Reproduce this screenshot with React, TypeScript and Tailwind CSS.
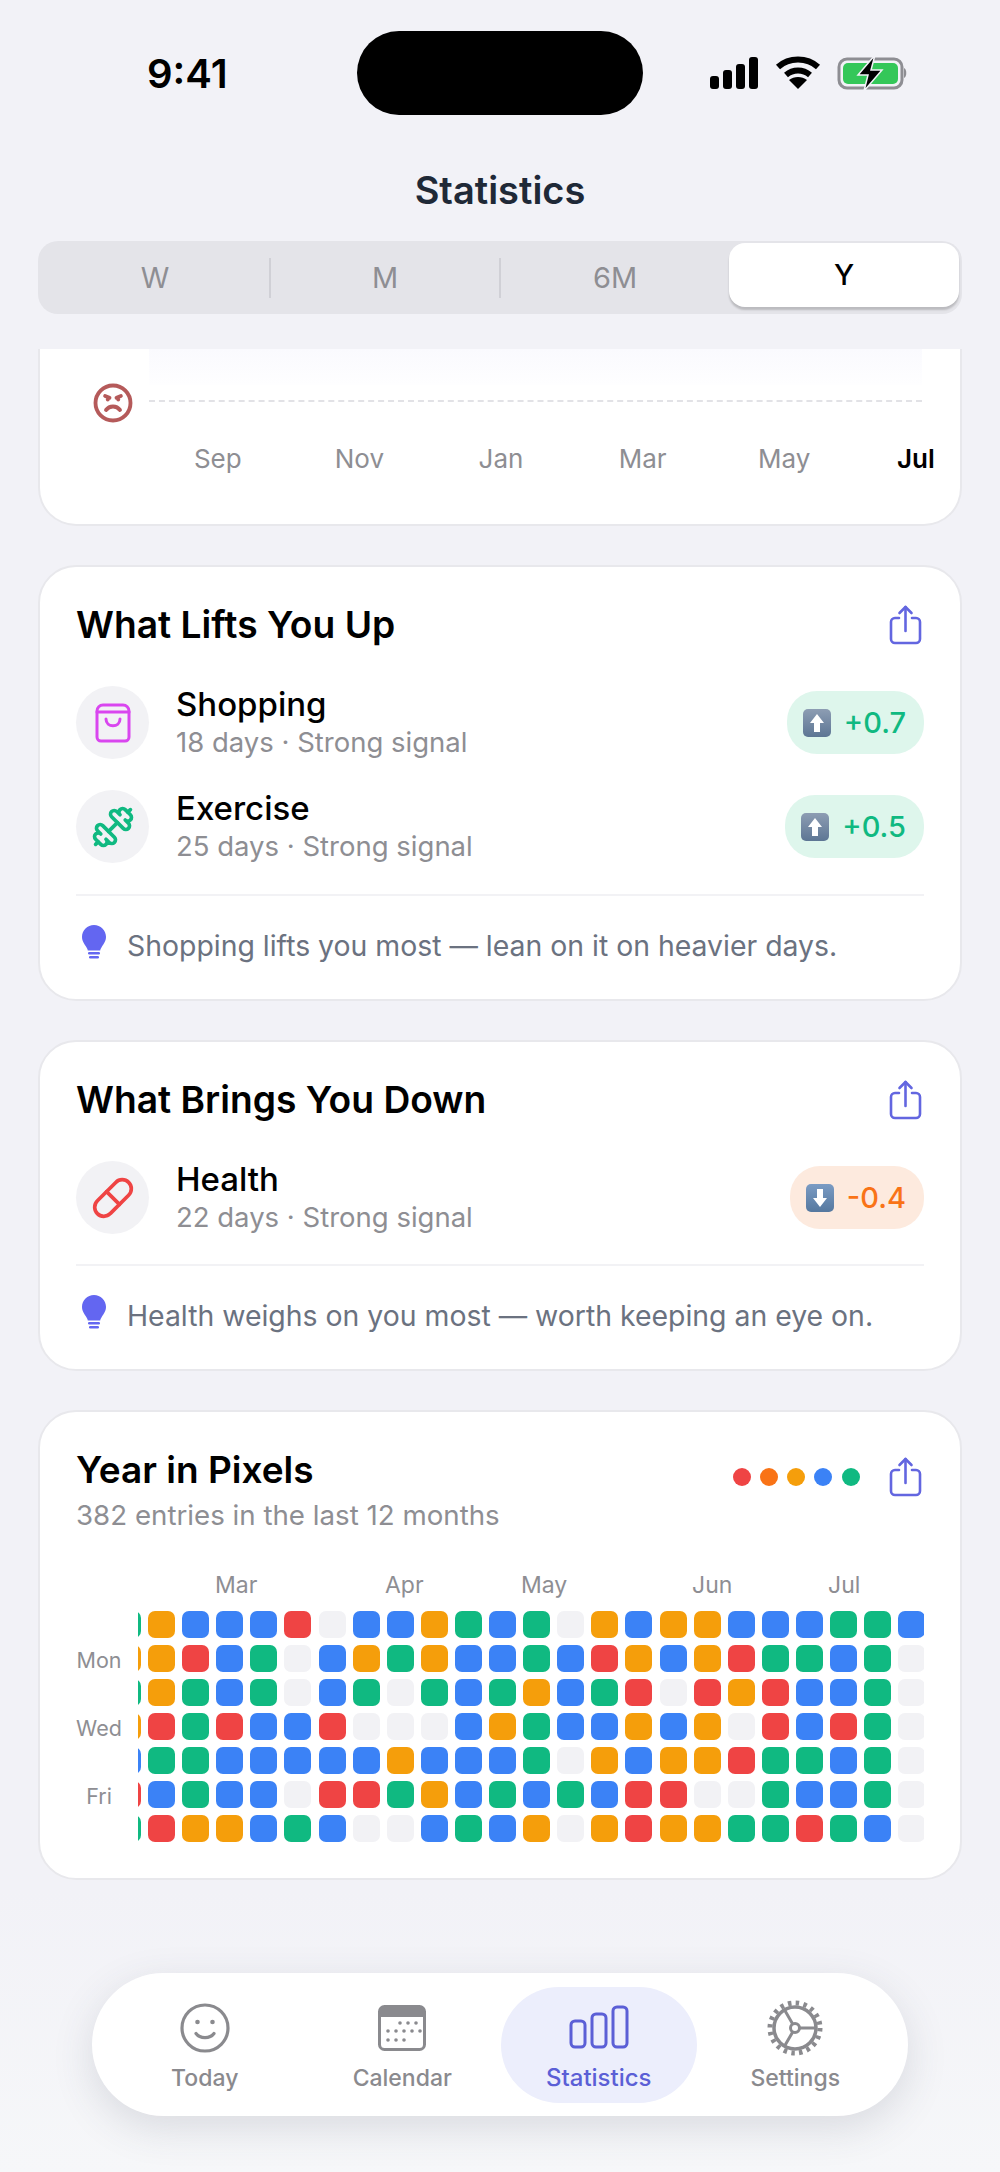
import { Angry, Dumbbell, Pill } from "lucide-react";

const font = { fontFamily: "Inter, 'Liberation Sans', sans-serif" };

const colors: Record<string, string> = {
  B: "bg-[#3b82f6]",
  G: "bg-[#10b981]",
  O: "bg-[#f59e0b]",
  R: "bg-[#ef4444]",
  E: "bg-[#f2f2f5]",
};

// one string per weekday row, first letter is the clipped column on the left
const pixelRows = [
  "GOBBBREBBOGBGEOBOOBBBGGB",
  "OORBGEBOGOBBGBROBORGGBGE",
  "GOGBGEBGEGBGOBGRERORBBGE",
  "ORGRBBREEEBOGBBOBOERBRGE",
  "BGGBBBBBOBBBGEOBOORGGBGE",
  "RBGBBERRGOBGBGBRREEGBBGE",
  "GROOBGBEEBGBOEOROOGGRGBE",
];

const ShareIcon = () => (
  <svg width="33" height="40" viewBox="0 0 33 40" fill="none" stroke="#6366e0" strokeWidth="2.6" strokeLinecap="round" strokeLinejoin="round">
    <path d="M10 13H6a4 4 0 0 0-4 4v17a4 4 0 0 0 4 4h21a4 4 0 0 0 4-4V17a4 4 0 0 0-4-4h-4" />
    <path d="M16.5 26V2" />
    <path d="M10.5 8l6-6 6 6" />
  </svg>
);

const BulbIcon = () => (
  <svg width="24" height="34" viewBox="0 0 24 34" className="shrink-0">
    <path fill="#6366f1" d="M12 0C5.4 0 0 5.2 0 11.8c0 4.6 2.6 7.4 4.4 10.4.9 1.4 1.2 2.4 1.4 3.3h12.4c.2-.9.5-1.900 1.400-3.300C21.400 19.200 24 16.400 24 11.800 24 5.200 18.600 0 12 0z" />
    <rect x="6" y="27" width="12" height="2.400" rx="1.200" fill="#6366f1" />
    <rect x="7" y="31" width="10" height="2.400" rx="1.200" fill="#6366f1" />
  </svg>
);

const BagIcon = () => (
  <svg width="36" height="40" viewBox="0 0 36 40" fill="none" stroke="#d946ef" strokeWidth="3" strokeLinecap="round" strokeLinejoin="round">
    <path d="M8 2h20a6 6 0 0 1 6 6v26a4 4 0 0 1-4 4H6a4 4 0 0 1-4-4V8a6 6 0 0 1 6-6z" />
    <path d="M2 9h32" />
    <path d="M11 16c0 9 14 9 14 0" />
  </svg>
);

const ArrowKey = ({ down }: { down?: boolean }) => (
  <div className={`w-[28px] h-[28px] rounded-[5px] flex items-center justify-center shrink-0 ${down ? "bg-gradient-to-b from-[#7b9cc4] to-[#55789f]" : "bg-gradient-to-b from-[#8d9db3] to-[#5d7694]"}`}>
    <svg width="16" height="20" viewBox="0 0 16 20" fill="#fff" className={down ? "rotate-180" : ""}>
      <path d="M8 1l7 9h-4v9H5v-9H1z" />
    </svg>
  </div>
);

const Card = ({ title, children }: { title: string; children: React.ReactNode }) => (
  <section className="mx-[38px] rounded-[38px] border-2 border-[#e8e8ec] bg-white px-[36px]">
    <div className="flex items-center justify-between h-[40px] mt-[38px] pr-[2px]">
      <h2 className="text-[37.2px] font-semibold text-black leading-none">{title}</h2>
      <ShareIcon />
    </div>
    {children}
  </section>
);

const SignalRow = ({ icon, name, sub, value, down }: { icon: React.ReactNode; name: string; sub: string; value: string; down?: boolean }) => (
  <div className="flex items-center h-[73px]">
    <div className="w-[73px] h-[73px] rounded-full bg-[#f2f2f5] flex items-center justify-center shrink-0">{icon}</div>
    <div className="ml-[27px] flex-1">
      <div className="text-[33px] font-medium text-black leading-[38px]">{name}</div>
      <div className="text-[27.5px] text-[#8e8e93] leading-[36px] mt-[1px]">{sub}</div>
    </div>
    <div className={`h-[63px] rounded-[30px] flex items-center gap-[13px] pl-[16px] pr-[18px] ${down ? "bg-[#fdeade]" : "bg-[#def6ec]"}`}>
      <ArrowKey down={down} />
      <span className={`text-[29px] font-medium ${down ? "text-[#f97316]" : "text-[#10b981]"}`}>{value}</span>
    </div>
  </div>
);

const Insight = ({ text }: { text: string }) => (
  <>
    <div className="h-[2px] bg-[#f2f2f5]" />
    <div className="flex items-start h-[103px] pt-[29px] pl-[6px]">
      <BulbIcon />
      <p className="ml-[21px] mt-[3px] text-[28.4px] leading-[36px] text-[#6b7280]">{text}</p>
    </div>
  </>
);

export default function App() {
  return (
    <div className="relative w-[1000px] h-[2172px] overflow-hidden bg-[#f2f2f7]" style={font}>
      {/* fade behind the tab bar */}
      <div className="absolute inset-x-0 top-[1890px] h-[282px] bg-gradient-to-b from-[#f2f2f7] to-[#f6f7f9]" />

      {/* status bar */}
      <div className="relative h-[168px]">
        <span className="absolute left-[147px] top-[50px] text-[40px] font-semibold text-black leading-[48px]">9:41</span>
        <div className="absolute left-[357px] top-[31px] w-[286px] h-[84px] rounded-[42px] bg-black" />
        <svg className="absolute left-[708px] top-[56px]" width="52" height="34" viewBox="0 0 52 34" fill="#000">
          <rect x="2" y="20" width="9" height="13" rx="3" />
          <rect x="15" y="14" width="9" height="19" rx="3" />
          <rect x="28" y="8" width="9" height="25" rx="3" />
          <rect x="41" y="1" width="9" height="32" rx="3" />
        </svg>
        <svg className="absolute left-[775px] top-[56px]" width="46" height="34" viewBox="0 0 46 34" fill="none" stroke="#000" strokeWidth="6">
          <path d="M3 11c11-10 29-10 40 0" />
          <path d="M11 19c7-6 17-6 24 0" />
          <path fill="#000" stroke="none" d="M23 33l-9-9c5-4 13-4 18 0z" />
        </svg>
        <svg className="absolute left-[837px] top-[54px]" width="72" height="38" viewBox="0 0 72 38">
          <rect x="2" y="5" width="63" height="29" rx="8" fill="none" stroke="#8e8e93" strokeWidth="3" />
          <rect x="6" y="9" width="55" height="21" rx="5" fill="#34c759" />
          <path d="M67 14c3 1 3 9 0 10z" fill="#8e8e93" />
          <path d="M38 1L21 21h10l-4 16 18-21H34z" fill="#000" stroke="#f2f2f7" strokeWidth="1.500" />
        </svg>
      </div>

      <h1 className="relative text-center text-[38px] font-semibold text-[#1f2937] leading-[44px]">Statistics</h1>

      {/* range picker */}
      <div className="relative mx-[38px] mt-[29px] h-[73px] rounded-[20px] bg-[#e4e4e9] flex items-center px-[3px]">
        {["W", "M", "6M"].map((label, i) => (
          <div key={label} className={`flex-1 h-[40px] flex items-center justify-center text-[29px] text-[#8e8e93] ${i < 2 ? "border-r-2 border-[#d0d0d6]" : ""}`}>
            {label}
          </div>
        ))}
        <div className="w-[230px] h-[64px] mb-[5px] rounded-[16px] bg-white flex items-center justify-center text-[29px] font-medium text-black shadow-[0_3px_2px_rgba(0,0,0,0.18)]">Y</div>
      </div>

      {/* mood chart, scrolled under the header */}
      <div className="relative mt-[35px] mx-[38px] h-[177px] rounded-b-[38px] border-x-2 border-b-2 border-[#e8e8ec] bg-white">
        <div className="relative h-[102px]">
          <div className="absolute left-[109px] right-[38px] top-0 h-[36px] bg-gradient-to-b from-[#fafafe] to-[#fefeff]" />
          <div className="absolute left-[52px] top-[33px] text-[#b55a5a]">
            <Angry size={42} strokeWidth={2.2} />
          </div>
          <div className="absolute left-[109px] right-[38px] top-[51px] border-t-2 border-dashed border-[#e2e2e6]" />
        </div>
        <div className="flex pl-[107px] text-[26px] text-[#8e8e93] leading-[32px] -mt-[8px]">
          {["Sep", "Nov", "Jan", "Mar", "May"].map((m) => (
            <span key={m} className="w-[141.6px] text-center">{m}</span>
          ))}
          <span className="ml-[42px] font-semibold text-black">Jul</span>
        </div>
      </div>

      <div className="relative mt-[39px] flex flex-col gap-[39px]">
        <Card title="What Lifts You Up">
          <div className="mt-[41px] flex flex-col gap-[31px]">
            <SignalRow icon={<BagIcon />} name="Shopping" sub="18 days · Strong signal" value="+0.7" />
            <SignalRow icon={<Dumbbell size={44} color="#10b981" strokeWidth={2} />} name="Exercise" sub="25 days · Strong signal" value="+0.5" />
          </div>
          <div className="mt-[31px]">
            <Insight text="Shopping lifts you most — lean on it on heavier days." />
          </div>
        </Card>

        <Card title="What Brings You Down">
          <div className="mt-[41px]">
            <SignalRow icon={<Pill size={44} color="#ef4444" strokeWidth={2} />} name="Health" sub="22 days · Strong signal" value="-0.4" down />
          </div>
          <div className="mt-[30px]">
            <Insight text="Health weighs on you most — worth keeping an eye on." />
          </div>
        </Card>

        {/* year in pixels */}
        <section className="mx-[38px] h-[470px] rounded-[38px] border-2 border-[#e8e8ec] bg-white px-[36px]">
          <div className="flex justify-between pt-[36px] pr-[2px]">
            <div>
              <h2 className="text-[37px] font-semibold text-black leading-[44px]">Year in Pixels</h2>
              <p className="text-[27.7px] text-[#8e8e93] leading-[36px] mt-[5px]">382 entries in the last 12 months</p>
            </div>
            <div className="flex items-center h-[44px] mt-[7px]">
              {["bg-[#ef4444]", "bg-[#f97316]", "bg-[#f59e0b]", "bg-[#3b82f6]", "bg-[#10b981]"].map((c) => (
                <span key={c} className={`w-[18px] h-[18px] rounded-full mr-[9.300px] ${c}`} />
              ))}
              <span className="ml-[20px]"><ShareIcon /></span>
            </div>
          </div>

          <div className="relative h-[30px] mt-[37px] text-[23px] leading-[30px] text-[#8e8e93]">
            <span className="absolute left-[139px]">Mar</span>
            <span className="absolute left-[309px]">Apr</span>
            <span className="absolute left-[445px]">May</span>
            <span className="absolute left-[616px]">Jun</span>
            <span className="absolute left-[752px]">Jul</span>
          </div>

          <div className="flex mt-[11px]">
            <div className="w-[62px] shrink-0 pr-[16px] -mt-[2px] text-[21.5px] text-[#8e8e93] text-center leading-[34px]">
              <div className="h-[34px]" />
              <div className="h-[34px]">Mon</div>
              <div className="h-[34px]" />
              <div className="h-[34px]">Wed</div>
              <div className="h-[34px]" />
              <div className="h-[34px]">Fri</div>
            </div>
            <div className="w-[786px] overflow-hidden">
              <div className="flex flex-col gap-[7px] -ml-[24px]">
                {pixelRows.map((row, r) => (
                  <div key={r} className="flex gap-[7.100px]">
                    {row.split("").map((c, i) => (
                      <span key={i} className={`w-[27px] h-[27px] rounded-[7px] shrink-0 ${colors[c]}`} />
                    ))}
                  </div>
                ))}
              </div>
            </div>
          </div>
        </section>
      </div>

      {/* floating tab bar */}
      <div className="absolute left-[92px] top-[1973px] w-[816px] h-[143px] rounded-[72px] bg-white shadow-[0_12px_40px_rgba(60,70,90,0.15)] flex items-center px-[14px] text-[23px] font-medium text-[#8a8a8e]">
        <div className="w-[198px] h-[116px] flex flex-col items-center justify-end pb-[7px] gap-[8px]">
          <svg width="50" height="50" viewBox="0 0 50 50" fill="none" stroke="#8a8a8e" strokeWidth="3.200" strokeLinecap="round">
            <circle cx="25" cy="25" r="23" />
            <circle cx="17.500" cy="19" r="2.300" fill="#8a8a8e" stroke="none" />
            <circle cx="32.500" cy="19" r="2.300" fill="#8a8a8e" stroke="none" />
            <path d="M16 30.500c4 5.500 14 5.500 18 0" />
          </svg>
          <span>Today</span>
        </div>
        <div className="w-[198px] h-[116px] flex flex-col items-center justify-end pb-[7px] gap-[10px]">
          <svg width="48" height="46" viewBox="0 0 48 46">
            <rect x="1.500" y="1.500" width="45" height="43" rx="5" fill="none" stroke="#8a8a8e" strokeWidth="3" />
            <path d="M1 6a5 5 0 0 1 5-5h36a5 5 0 0 1 5 5v6H1z" fill="#8a8a8e" />
            {[[22, 18], [30, 18], [38, 18], [10, 26], [18, 26], [26, 26], [34, 26], [42, 26], [10, 35], [18, 35], [26, 35]].map(([x, y]) => (
              <circle key={`${x}-${y}`} cx={x} cy={y} r="1.800" fill="#8a8a8e" />
            ))}
          </svg>
          <span>Calendar</span>
        </div>
        <div className="w-[196px] h-[116px] rounded-[58px] bg-[#eceefc] flex flex-col items-center justify-end pb-[7px] gap-[11px] text-[24px] text-[#5b5fd6]">
          <svg width="60" height="44" viewBox="0 0 60 44" fill="none" stroke="#5b5fd6" strokeWidth="3">
            <rect x="2" y="16" width="14" height="26" rx="4" />
            <rect x="23" y="9" width="14" height="33" rx="4" />
            <rect x="44" y="2" width="14" height="40" rx="4" />
          </svg>
          <span>Statistics</span>
        </div>
        <div className="w-[198px] h-[116px] flex flex-col items-center justify-end pb-[7px] gap-[5px]">
          <svg width="56" height="56" viewBox="0 0 56 56" fill="none" stroke="#8a8a8e">
            <circle cx="28" cy="28" r="21" strokeWidth="3.500" />
            <circle cx="28" cy="28" r="25" strokeWidth="5" strokeDasharray="3.500 4.350" />
            <circle cx="28" cy="28" r="4.500" strokeWidth="3" />
            <path d="M32.500 28H49M25.700 24L17 9M25.700 32L17 47" strokeWidth="3" />
          </svg>
          <span>Settings</span>
        </div>
      </div>
    </div>
  );
}
